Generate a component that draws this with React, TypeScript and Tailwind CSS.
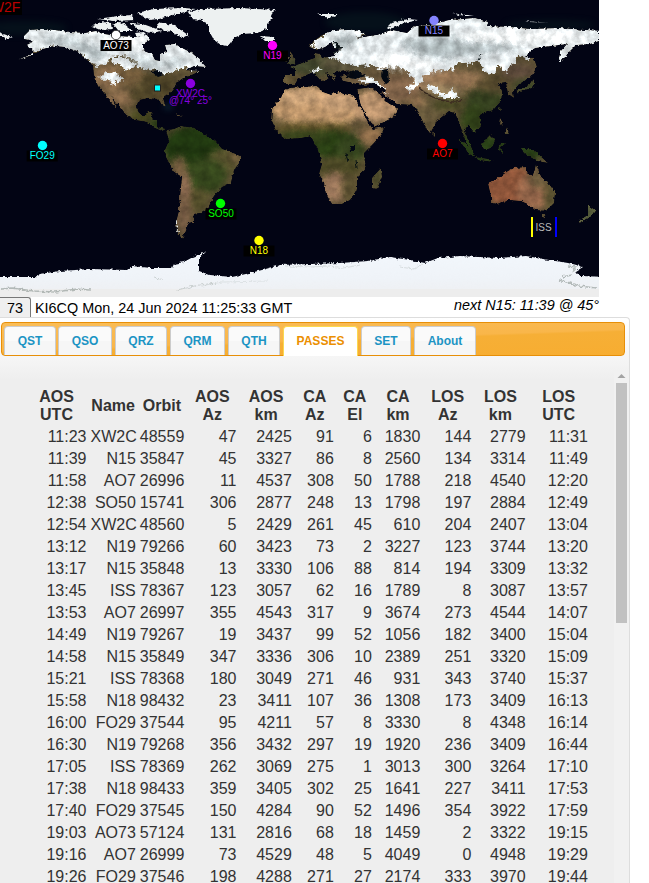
import React from "react";

const LAND =
  // North America
  "M24,36 L30,30 L42,29 L55,30 L70,32 L85,33 L96,31 L104,34 L118,36 L135,37 L147,35 L150,40 L143,44 L143,50 L152,54 L155,60 L160,61 L160,54 L167,52 L165,45 L175,44 L184,49 L192,53 L200,60 L206,67 L194,66 L186,70 L200,71 L192,75 L186,76 L178,82 L174,88 L170,93 L163,98 L166,107 L162,105 L158,99 L148,98 L139,100 L136,107 L140,115 L146,115 L149,111 L153,112 L151,118 L157,120 L157,127 L166,129 L162,131 L153,127 L147,122 L136,120 L126,115 L121,108 L111,96 L117,108 L112,104 L104,93 L98,86 L94,76 L93,66 L85,58 L79,52 L65,47 L54,46 L43,49 L33,55 L18,60 L35,52 L27,45 L34,41 L24,39Z " +
  // South America
  "M166,130 L174,129 L181,126 L194,128 L204,134 L215,141 L222,149 L231,152 L240,156 L240,162 L234,170 L231,183 L222,187 L214,196 L208,208 L200,213 L194,214 L193,222 L188,223 L186,231 L182,238 L177,234 L176,222 L179,211 L180,197 L182,177 L173,171 L166,157 L165,150 L169,141Z " +
  // Africa, Arabia, Madagascar
  "M290,88 L302,87 L317,86 L320,91 L331,95 L338,92 L348,95 L355,96 L357,103 L363,112 L368,122 L373,129 L384,127 L382,134 L373,144 L364,153 L366,169 L357,177 L357,189 L350,200 L342,204 L332,204 L326,194 L324,183 L319,174 L322,164 L318,150 L314,142 L311,136 L300,138 L286,139 L276,131 L271,120 L272,109 L281,98 L284,91Z M357,89 L372,87 L381,96 L388,103 L398,109 L394,117 L384,122 L374,127 L367,116 L361,105Z M381,168 L382,177 L377,189 L372,188 L372,178Z " +
  // Eurasia
  "M284,84 L284,75 L295,75 L295,69 L290,67 L300,64 L309,60 L315,58 L315,53 L320,54 L322,58 L334,56 L335,51 L342,50 L333,48 L332,42 L325,47 L317,50 L309,47 L311,43 L322,35 L334,30 L347,29 L360,31 L366,34 L357,38 L376,35 L392,30 L407,33 L415,26 L430,25 L449,20 L475,18 L488,22 L487,26 L510,27 L530,29 L560,28 L599,31 L599,41 L590,44 L576,45 L570,51 L562,61 L559,61 L560,52 L567,44 L552,46 L534,48 L525,57 L534,58 L537,67 L531,77 L519,84 L513,91 L514,98 L508,94 L506,82 L498,83 L502,91 L501,101 L493,110 L479,115 L481,126 L475,133 L468,125 L464,131 L472,149 L474,155 L466,142 L461,128 L455,113 L449,111 L437,121 L431,132 L427,131 L418,111 L412,105 L397,104 L381,93 L388,91 L375,84 L361,85 L344,81 L340,76 L350,74 L344,70 L334,73 L336,81 L326,72 L329,80 L321,81 L313,72 L298,79 L295,84Z " +
  // British Isles
  "M290,51 L293,55 L296,63 L288,65 L290,58Z M284,57 L289,57 L287,62 L284,61Z " +
  // Japan and the seas of south-east Asia
  "M533,79 L535,84 L532,88 L520,91 L518,94 L516,91 L529,85Z M500,107 L501,111 L498,109Z M500,116 L503,126 L499,124Z M507,127 L510,134 L504,134Z M490,135 L495,140 L492,148 L484,149 L481,144Z M458,138 L469,147 L475,156 L469,154Z M500,143 L506,143 L501,147 L503,154 L498,150Z M474,157 L488,159 L494,162 L480,160Z M521,147 L535,151 L548,163 L537,161 L524,153Z " +
  // Australia, New Zealand
  "M488,183 L500,177 L508,171 L514,168 L526,167 L526,173 L533,176 L536,164 L541,177 L548,183 L555,192 L554,203 L546,211 L535,210 L528,204 L521,201 L509,200 L497,204 L491,203 L491,196Z M541,214 L546,214 L544,219Z M588,205 L596,211 L590,217 L579,224 L580,220 L588,215Z " +
  // Cuba, Hispaniola, Sri Lanka
  "M159,109 L170,112 L175,113 L166,111Z M175,114 L183,116 L177,116Z M432,131 L435,135 L433,138Z";

const ICE =
  "M188,12 L204,9 L240,8 L276,10 L270,14 L272,19 L267,24 L267,29 L257,33 L242,34 L234,38 L228,46 L221,45 L214,40 L209,31 L209,25 L202,20 L192,19Z " +
  "M92,26 L101,22 L111,23 L112,29 L101,30Z M113,24 L120,22 L127,26 L133,31 L119,31Z M130,23 L143,24 L154,28 L162,31 L151,33 L137,29Z M97,19 L118,16 L132,15 L135,20 L114,21Z M137,13 L154,9 L184,8 L196,9 L177,14 L158,19 L149,20Z M157,22 L174,25 L188,35 L182,38 L175,33 L158,28Z M135,33 L144,32 L145,36 L137,37Z " +
  "M260,36 L274,37 L275,41 L265,41Z M317,14 L339,14 L329,18Z M386,29 L392,23 L408,19 L418,20 L404,23 L393,28Z M452,13 L474,16 L464,16Z M525,21 L548,23 L530,22Z M588,30 L599,31 L589,29Z " +
  "M-2,32 L12,37 L7,39 L-2,35Z";

const ANTARCTICA =
  "M-5,277 L35,277 L40,274 L60,271 L90,269 L127,270 L132,266 L150,268 L172,268 L174,264 L184,262 L193,257 L206,252 L199,258 L199,271 L210,275 L232,277 L246,274 L262,270 L280,265 L310,264 L340,263 L368,261 L390,257 L410,260 L425,263 L438,258 L460,256 L478,257 L500,258 L526,256 L543,259 L568,263 L583,267 L575,272 L581,276 L605,277 L605,305 L-5,305Z";

const SNOW =
  "M20,26 H150 L190,42 L212,66 L196,70 L184,68 L172,72 L160,74 L150,70 L139,68 L136,60 L124,56 L110,57 L106,65 L96,66 L88,59 L76,50 L50,47 L10,64Z M108,58 L125,58 L138,66 L126,68 L113,63Z M99,76 L109,72 L121,74 L122,79 L114,84 L104,79Z M123,67 L128,68 L126,72Z " +
  "M310,47 L325,34 L347,26 L366,33 L357,38 L400,26 L420,18 H604 V64 H540 L535,57 L529,60 L518,56 L511,66 L505,72 L500,66 L492,75 L482,70 L478,60 L470,64 L459,62 L450,71 L440,69 L434,72 L425,76 L418,87 L408,91 L416,79 L404,69 L389,66 L380,70 L371,65 L354,66 L337,60 L327,55 L334,50 L334,43 L324,49Z M309,72 L320,67 L322,69 L313,73Z M357,80 L372,77 L380,84 L387,95 L379,88 L366,83Z M405,87 L413,84 L410,91Z M428,84 L435,86 L440,92 L448,94 L451,88 L459,98 L446,98 L427,88Z M484,62 L500,60 L496,73 L484,70Z M175,220 L177,221 L178,234 L176,230Z";

const PINS = [
  { name: "AO73", x: 116, y: 35, color: "#ffffff", ring: true, lx: 116, ly: 45 },
  { name: "XW2C", x: 190.5, y: 83.5, color: "#8a00e0", lx: 190.5, ly: 93.5, clear: true },
  { name: "N19", x: 272.5, y: 45.5, color: "#ff00ff", lx: 272.5, ly: 55.5 },
  { name: "N15", x: 434, y: 20.5, color: "#8484ff", lx: 434, ly: 30.5 },
  { name: "FO29", x: 42.5, y: 145.5, color: "#00ffff", lx: 42.2, ly: 155.5 },
  { name: "AO7", x: 442.5, y: 143.5, color: "#ff0000", lx: 442.5, ly: 153.5 },
  { name: "SO50", x: 220.5, y: 203.5, color: "#00ff00", lx: 221, ly: 213.5 },
  { name: "N18", x: 259, y: 240.5, color: "#ffff00", lx: 259, ly: 250.5 },
];

const TONES: [number, number, number, number, string, number][] = [
  // x, y, rx, ry, colour, opacity
  [108, 78, 16, 14, "#8a6c4c", 1], [130, 76, 18, 10, "#79603f", 0.9], [120, 98, 16, 9, "#87694a", 1],
  [157, 84, 18, 13, "#4a4025", 1], [145, 95, 16, 8, "#4d4327", 1], [142, 116, 12, 8, "#45451f", 1], [160, 124, 12, 7, "#283a15", 1],
  [194, 148, 31, 23, "#203710", 1], [222, 163, 15, 14, "#56512c", 1], [205, 176, 22, 18, "#35461c", 1], [197, 200, 12, 12, "#514c29", 1],
  [179, 168, 7, 12, "#735b3e", 1], [185, 187, 6, 15, "#987257", 1], [184, 214, 8, 20, "#705740", 1], [235, 157, 5, 6, "#6f5b3c", 1],
  [318, 107, 48, 20, "#bd956a", 1], [301, 96, 22, 9, "#c29c74", 1], [340, 101, 22, 10, "#c29b74", 1], [376, 106, 23, 17, "#b8916c", 1],
  [313, 129, 39, 7, "#64552c", 1], [333, 145, 25, 15, "#293e14", 1], [303, 136, 26, 6, "#35421a", 1], [351, 150, 15, 14, "#35441e", 1],
  [371, 136, 12, 9, "#8c6b49", 1], [340, 168, 22, 11, "#4b4825", 1], [335, 187, 13, 15, "#9a765a", 1], [350, 188, 9, 14, "#5b5030", 1], [377, 178, 5, 12, "#4f4e2c", 1],
  [313, 66, 34, 10, "#3f442b", 1], [291, 80, 12, 7, "#615334", 1], [347, 64, 28, 8, "#59523b", 1], [362, 80, 20, 6, "#705b41", 1],
  [397, 73, 33, 10, "#66543a", 1], [399, 89, 25, 13, "#806349", 1], [434, 80, 24, 12, "#98795a", 1], [459, 80, 29, 9, "#907050", 1], [442, 91, 20, 6, "#99835f", 1],
  [428, 108, 19, 14, "#65573a", 1], [417, 101, 8, 6, "#91704f", 1], [448, 105, 16, 6, "#4c4c26", 1], [486, 102, 21, 14, "#35401f", 1], [496, 84, 20, 9, "#54482c", 1],
  [473, 120, 13, 15, "#304018", 1], [518, 72, 17, 9, "#5a4839", 1], [526, 86, 14, 7, "#3e4627", 1], [480, 150, 70, 15, "#263c15", 1],
  [511, 186, 28, 21, "#8c5439", 1], [534, 191, 17, 19, "#906348", 1], [540, 177, 12, 12, "#68573a", 1], [551, 195, 7, 16, "#5e5532", 1], [588, 215, 12, 12, "#59603e", 1],
];

function WorldMap() {
  return (
    <div className="relative h-[297px] w-[599px] shrink-0 overflow-hidden bg-[#020414]">
      <svg className="block" width="599" height="297" viewBox="0 0 599 297">
        <defs>
          <clipPath id="landClip"><path d={LAND} /></clipPath>
          <filter id="soft" x="-30%" y="-30%" width="160%" height="160%" colorInterpolationFilters="sRGB"><feGaussianBlur stdDeviation="3" /></filter>
          <filter id="terrain" x="0" y="0" width="599" height="297" filterUnits="userSpaceOnUse" colorInterpolationFilters="sRGB">
            <feTurbulence type="fractalNoise" baseFrequency="0.28" numOctaves="3" seed="4" result="n" />
            <feDisplacementMap in="SourceGraphic" in2="n" scale="3.5" xChannelSelector="R" yChannelSelector="G" result="d" />
            <feTurbulence type="fractalNoise" baseFrequency="0.11" numOctaves="5" seed="8" result="t" />
            <feColorMatrix in="t" type="matrix" values="1 0 0 0 0  1 0 0 0 0  1 0 0 0 0  0 0 0 0 1" result="g" />
            <feComposite in="d" in2="g" operator="arithmetic" k1="0.5" k2="0.76" k3="0" k4="0" result="m" />
            <feComposite in="m" in2="d" operator="in" />
          </filter>
          <filter id="snowCover" x="0" y="0" width="599" height="297" filterUnits="userSpaceOnUse" colorInterpolationFilters="sRGB">
            <feTurbulence type="fractalNoise" baseFrequency="0.23" numOctaves="4" seed="6" result="n" />
            <feDisplacementMap in="SourceGraphic" in2="n" scale="8" xChannelSelector="R" yChannelSelector="G" />
          </filter>
          <filter id="iceEdge" x="0" y="0" width="599" height="297" filterUnits="userSpaceOnUse" colorInterpolationFilters="sRGB">
            <feTurbulence type="fractalNoise" baseFrequency="0.3" numOctaves="3" seed="12" result="n" />
            <feDisplacementMap in="SourceGraphic" in2="n" scale="4" xChannelSelector="R" yChannelSelector="G" />
          </filter>
          <linearGradient id="polar" x1="0" y1="0" x2="0" y2="1">
            <stop offset="0" stopColor="#f2f7fc" /><stop offset="0.5" stopColor="#eff3f8" /><stop offset="1" stopColor="#ededed" />
          </linearGradient>
        </defs>
        <rect width="599" height="297" fill="#020414" />
        <g filter="url(#soft)" fill="#07191f" opacity="0.6">
          <ellipse cx="25" cy="28" rx="42" ry="7" /><ellipse cx="365" cy="22" rx="40" ry="10" />
          <ellipse cx="550" cy="25" rx="45" ry="5" /><ellipse cx="168" cy="107" rx="5" ry="2" fill="#124b5a" />
        </g>
        <g filter="url(#terrain)">
          <g clipPath="url(#landClip)">
            <rect width="599" height="297" fill="#5d5034" />
            {TONES.map(([x, y, rx, ry, c, o], i) => (
              <ellipse key={i} cx={x} cy={y} rx={rx} ry={ry} fill={c} opacity={o} filter="url(#soft)" />
            ))}
            <g filter="url(#snowCover)">
              <path d={SNOW} fill="#e2e8ea" />
              <g filter="url(#soft)" fill="#a0acaf" opacity="0.75">
                <path d="M40,39 L65,36 L90,44 L110,53 L95,62 L75,48 L46,44Z" />
                <path d="M126,52 L158,63 L187,57 L179,66 L153,69 L131,62Z" />
                <path d="M400,40 L435,35 L490,39 L527,47 L480,55 L440,60 L407,51Z" />
                <path d="M326,44 L344,34 L361,40 L345,49Z" />
              </g>
              <g filter="url(#soft)" fill="#fbfdfd" opacity="0.9">
                <ellipse cx="394" cy="61" rx="20" ry="7" /><ellipse cx="424" cy="66" rx="17" ry="5" />
                <ellipse cx="520" cy="37" rx="65" ry="6" /><ellipse cx="125" cy="42" rx="23" ry="6" />
              </g>
            </g>
            <path d="M346,72 L356,70 L366,76 L355,79 L346,77Z M382,70 L388,69 L389,82 L385,85 L381,76Z M151,71 L158,70 L164,75 L158,77Z M350,146 H355 V151 H351Z" fill="#030913" />
            <path d="M334,41 L337,47 L333,54 L342,48 L337,44Z M346,153 L348,162 M356,160 L357,168 M478,60 L482,54" stroke="#071013" strokeWidth="1" fill="#071013" />
            <path d="M419,88 Q430,98 445,101 T462,99" stroke="#3b2b20" strokeWidth="1.4" fill="none" />
          </g>
        </g>
        <path d={ICE} fill="#edf1f1" filter="url(#iceEdge)" />
        <path d={ANTARCTICA} fill="url(#polar)" filter="url(#iceEdge)" />
        <rect y="289" width="599" height="8" fill="#ededed" />
        <g filter="url(#iceEdge)" fill="none" stroke="#8b9591" strokeWidth="0.6" opacity="0.6">
          <path d="M2,289 L12,288 L33,291 L55,292 L77,289 L90,290" strokeWidth="1.3" />
          <path d="M154,277 L163,280 M177,290 L199,285 L216,283" />
          <path d="M202,286 L222,282 L268,281" opacity="0.5" />
          <path d="M285,266 L310,267 L330,266 L344,268 L360,265 M400,267 L414,269 L422,264" opacity="0.7" />
          <path d="M559,280 L570,283 L579,286 L596,288 M568,266 L576,267 L572,272 M562,277 L572,275" strokeWidth="1.5" />
        </g>
        <rect x="154.5" y="85" width="6" height="6" fill="#00ffff" stroke="#222" strokeWidth="1" />
        {PINS.map((p) => (
          <circle key={p.name} cx={p.x} cy={p.y} r="4.7" fill={p.color} stroke={p.ring ? "#000" : "none"} strokeWidth="0.7" />
        ))}
        <g fontFamily="'Liberation Sans', Arial, sans-serif" fontSize="10" textAnchor="middle">
          <text x="190.5" y="104" fill="#8a00e0">@74° 25°</text>
          <rect x="197" y="96" width="6" height="3" fill="#020414" />
          {PINS.map((p) => (
            <g key={p.name}>
              {!p.clear && <rect x={p.lx - 15.5} y={p.ly - 5} width="31" height="11" fill="#000" />}
              <text x={p.lx} y={p.ly + 3.6} fill={p.color}>{p.name}</text>
            </g>
          ))}
          <rect x="531" y="217" width="2" height="20" fill="#ffff00" />
          <rect x="555" y="217" width="2" height="20" fill="#0000ff" />
          <text x="543.5" y="230.8" fill="#b8b8b8">ISS</text>
        </g>
        <rect width="22" height="15" fill="#000" />
        <text x="20.3" y="12" textAnchor="end" fill="#b80000" fontSize="14" fontFamily="'Liberation Sans', Arial, sans-serif">XW2F</text>
      </svg>
    </div>
  );
}

const TABS = [
  { label: "QST", cls: "w-[52px]" },
  { label: "QSO", cls: "w-[54px]" },
  { label: "QRZ", cls: "w-[52px]" },
  { label: "QRM", cls: "w-[55px]" },
  { label: "QTH", cls: "w-[52px]" },
  { label: "PASSES", cls: "w-[75px]" },
  { label: "SET", cls: "w-[50px]" },
  { label: "About", cls: "w-[62px]" },
];

const HEADS = ["AOS UTC", "Name", "Orbit", "AOS Az", "AOS km", "CA Az", "CA El", "CA km", "LOS Az", "LOS km", "LOS UTC"];

const PASSES = `11:23 XW2C 48559 47 2425 91 6 1830 144 2779 11:31
11:39 N15 35847 45 3327 86 8 2560 134 3314 11:49
11:58 AO7 26996 11 4537 308 50 1788 218 4540 12:20
12:38 SO50 15741 306 2877 248 13 1798 197 2884 12:49
12:54 XW2C 48560 5 2429 261 45 610 204 2407 13:04
13:12 N19 79266 60 3423 73 2 3227 123 3744 13:20
13:17 N15 35848 13 3330 106 88 814 194 3309 13:32
13:45 ISS 78367 123 3057 62 16 1789 8 3087 13:57
13:53 AO7 26997 355 4543 317 9 3674 273 4544 14:07
14:49 N19 79267 19 3437 99 52 1056 182 3400 15:04
14:58 N15 35849 347 3336 306 10 2389 251 3320 15:09
15:21 ISS 78368 180 3049 271 46 931 343 3740 15:37
15:58 N18 98432 23 3411 107 36 1308 173 3409 16:13
16:00 FO29 37544 95 4211 57 8 3330 8 4348 16:14
16:30 N19 79268 356 3432 297 19 1920 236 3409 16:44
17:05 ISS 78369 262 3069 275 1 3013 300 3264 17:10
17:38 N18 98433 359 3405 302 25 1641 227 3411 17:53
17:40 FO29 37545 150 4284 90 52 1496 354 3922 17:59
19:03 AO73 57124 131 2816 68 18 1459 2 3322 19:15
19:16 AO7 26999 73 4529 48 5 4049 0 4948 19:29
19:26 FO29 37546 198 4288 271 27 2174 333 3970 19:44`
  .split("\n")
  .map((line) => line.split(" "));

const COLS = "grid grid-cols-[60px_45.3px_44.2px_48.5px_51.3px_38px_34px_44.5px_47px_50.3px_58.3px] gap-x-1";

export default function App() {
  return (
    <div className="flex h-[883px] w-[649px] flex-col overflow-hidden bg-white font-['Liberation_Sans',Arial,sans-serif]">
      <WorldMap />
      <div className="flex h-5 w-[599px] shrink-0 items-start text-black">
        <div className="h-5 w-[31px] shrink-0 rounded-tr-[3px] border-t border-r border-[#777] bg-[#efefef] pt-px text-center text-[14.4px] leading-[18px]">73</div>
        <span className="ml-1 whitespace-nowrap pt-[2px] text-[14.4px] leading-[18px]">KI6CQ Mon, 24 Jun 2024 11:25:33 GMT</span>
        <span className="ml-auto whitespace-nowrap text-[14.4px] leading-[16px] italic">next N15: 11:39 @ 45°</span>
      </div>
      <div className="flex w-[630px] flex-1 flex-col overflow-hidden rounded-tr border-t border-r border-[#ddd] bg-[#eee] bg-[linear-gradient(#fff,#f6f6f6_38px,#eee_62px)] pt-1 pl-px">
        <div className="flex h-[34px] w-[624px] shrink-0 gap-[3px] rounded border border-[#e78f08] bg-[linear-gradient(178deg,#fabd57_0%,#f9b64a_52%,#f6af36_56%,#f7ad31_100%)] pt-[3px] pl-[2px]">
          {TABS.map((t) =>
            t.label === "PASSES" ? (
              <div key={t.label} className={`${t.cls} h-[30px] rounded-t border border-b-0 border-[#fbd850] bg-white pt-[6px] text-center text-[12px] leading-4 font-bold text-[#eb8f00]`}>{t.label}</div>
            ) : (
              <div key={t.label} className={`${t.cls} ${t.label === "QSO" ? "-ml-px" : ""} h-[29px] rounded-t border border-b-0 border-[#ccc] bg-[linear-gradient(#fafafa_50%,#f6f6f6_50%)] pt-[6px] text-center text-[12px] leading-4 font-bold text-[#1c94c4]`}>{t.label}</div>
            ),
          )}
        </div>
        <div className="flex min-h-0 flex-1 justify-between pt-[14px]">
          <div className="pt-[18px] pl-[25.5px] text-[16px] text-[#333]">
            <div className={`${COLS} mb-[3px] h-9 items-center text-center leading-[18px] font-bold`}>
              {HEADS.map((h) => (
                <div key={h}>
                  {h.split(" ").map((w) => <div key={w}>{w}</div>)}
                </div>
              ))}
            </div>
            {PASSES.map((row) => (
              <div key={row[2]} className={`${COLS} h-[22px] text-right leading-5`}>
                {row.map((v, i) => <div key={i} className="whitespace-nowrap">{v}</div>)}
              </div>
            ))}
          </div>
          <div className="flex w-[15px] flex-col items-center bg-[#f1f1f1]">
            <svg width="15" height="13" viewBox="0 0 15 13"><path d="M3.5 8 L7.5 4 L11.5 8Z" fill="#a3a3a3" /></svg>
            <div className="h-[240px] w-[11px] bg-[#c1c1c1]" />
          </div>
        </div>
      </div>
    </div>
  );
}
